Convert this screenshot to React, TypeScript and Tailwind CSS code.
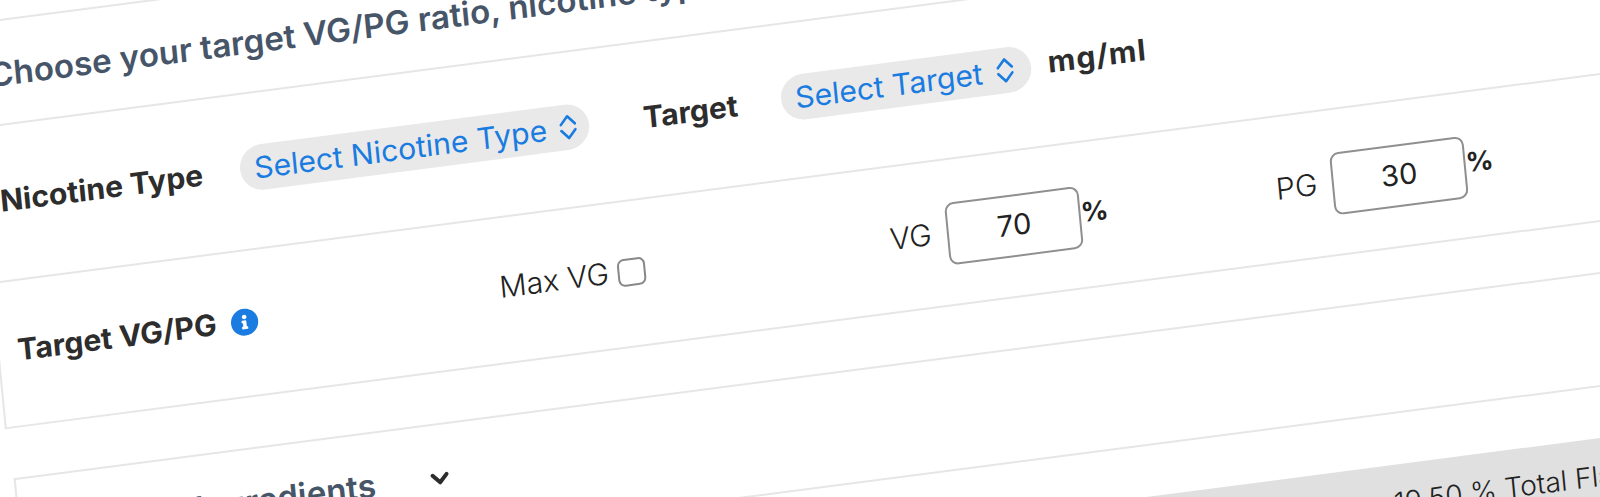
import React from 'react';
import { FaInfoCircle } from 'react-icons/fa';

const font = "font-['Inter','Noto_Sans',sans-serif]";

function UpDownIcon() {
  return (
    <svg width="20" height="28" viewBox="0 0 20 28" fill="none" stroke="#1a7be0" strokeWidth="2.6" strokeLinecap="round" strokeLinejoin="round" className="shrink-0">
      <path d="M3 11 10 3l7 8" />
      <path d="M3 17 10 25l7-8" />
    </svg>
  );
}

function SelectPill({ label, className }: { label: string; className: string }) {
  return (
    <div className={`flex h-[46px] items-center rounded-[23px] bg-[#e9e9e9] pl-[14px] text-[30px] text-[#1a7be0] ${className}`}>
      <span className="whitespace-nowrap">{label}</span>
      <UpDownIcon />
    </div>
  );
}

function NumberBox({ value }: { value: string }) {
  return (
    <div className="mt-[3px] flex h-[63px] w-[134px] shrink-0 items-center justify-center rounded-[9px] border-2 border-[#8f8f8f] text-[29px] text-[#222]">
      {value}
    </div>
  );
}

export default function App() {
  return (
    <div className={`h-[497px] w-full overflow-hidden bg-white ${font}`}>
      <div className="w-[1960px] origin-top-left [transform:matrix(1,-0.13,0.095,0.98765,-40,5.2)]">
        <div className="h-[21px] border-b-2 border-[#e6e6e6]" />

        <div className="flex h-[105px] items-center border-b-2 border-[#e6e6e6] pt-[4px] pl-[22px] text-[33px] font-semibold whitespace-nowrap text-[#475569]">
          Choose your target VG/PG ratio, nicotine type and strength
        </div>

        <div className="flex h-[157px] items-center border-b-2 border-[#e6e6e6] pb-[5px] pl-[21px] text-[#2d2d2d]">
          <span className="w-[240px] text-[30px] font-bold whitespace-nowrap">Nicotine Type</span>
          <SelectPill label="Select Nicotine Type" className="w-[349px] gap-[11px]" />
          <span className="ml-[54px] w-[138px] text-[30px] font-bold">Target</span>
          <SelectPill label="Select Target" className="w-[250px] gap-[13px]" />
          <span className="ml-[17px] pb-[6px] text-[30px] font-bold tracking-[1px]">mg/ml</span>
        </div>

        <div className="ml-[4px] flex h-[147px] items-center border-b-2 border-l-2 border-[#e6e6e6] pl-[18px] text-[#222]">
          <span className="pb-[7px] text-[30px] font-bold whitespace-nowrap text-[#2d2d2d]">Target VG/PG</span>
          <FaInfoCircle className="mb-[4px] ml-[14px] shrink-0 text-[#1a7be0]" size={28} />
          <span className="ml-[241px] pb-[7px] text-[30px] font-light whitespace-nowrap">Max VG</span>
          <div className="mb-[3px] ml-[9px] h-[28px] w-[28px] shrink-0 rounded-[7px] border-2 border-[#888]" />
          <span className="ml-[244px] w-[57px] text-[30px] font-light">VG</span>
          <NumberBox value="70" />
          <span className="w-[195px] pb-[3px] text-[27px] font-bold">%</span>
          <span className="w-[56px] text-[30px] font-light">PG</span>
          <NumberBox value="30" />
          <span className="pb-[3px] text-[27px] font-bold">%</span>
        </div>

        <div className="h-[50px]" />

        <div className="ml-[8px] flex h-[115px] items-center border-t-2 border-b-2 border-l-2 border-[#e6e6e6]">
          <span className="ml-[68px] w-[341px] pb-[5px] text-[33px] font-semibold whitespace-nowrap text-[#475569]">Flavor Ingredients</span>
          <svg width="20" height="14" viewBox="0 0 20 14" fill="none" stroke="#2d2d2d" strokeWidth="4" strokeLinecap="round" strokeLinejoin="round" className="mb-[3px]">
            <path d="M3 3 10 10.5 17 3" />
          </svg>
        </div>

        <div className="h-[51px]" />

        <div className="flex h-[75px] items-center bg-[#e0e0e0] pl-[1369px] text-[28px] font-light whitespace-nowrap text-[#222]">
          19.50 % Total Flavor
        </div>
      </div>
    </div>
  );
}
